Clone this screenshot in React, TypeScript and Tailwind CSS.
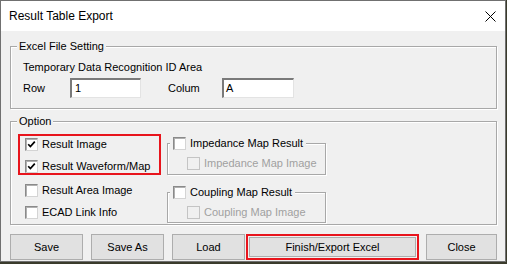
import React from "react";

const font = { fontFamily: '"Liberation Sans", Arial, sans-serif' };

function Check({ checked = false, disabled = false }: { checked?: boolean; disabled?: boolean }) {
  return (
    <div
      className={
        "w-[13px] h-[13px] shrink-0 flex items-center justify-center border " +
        (disabled
          ? "border-[#c4c4c4] bg-[#f0f0f0]"
          : "border-t-[#8a8a8a] border-l-[#8a8a8a] border-r-[#d4d4d4] border-b-[#d4d4d4] bg-white shadow-[inset_1px_1px_0_#b0b0b0]")
      }
    >
      {checked && (
        <svg width="9" height="9" viewBox="0 0 9 9">
          <path d="M1.2 4.2 L3.4 6.6 L7.8 1.6" fill="none" stroke="#000" strokeWidth="1.7" />
        </svg>
      )}
    </div>
  );
}

function CheckRow({ label, checked, disabled }: { label: string; checked?: boolean; disabled?: boolean }) {
  return (
    <div className="flex items-center h-[13px]">
      <Check checked={checked} disabled={disabled} />
      <span className={"ml-[4px] text-[11px] leading-[13px] whitespace-nowrap " + (disabled ? "text-[#a0a0a0]" : "text-black")}>
        {label}
      </span>
    </div>
  );
}

function Btn({ label, w }: { label: string; w: string }) {
  return (
    <div className={"h-[26px] flex items-center justify-center bg-[#e1e1e1] border border-[#adadad] text-[11px] text-black " + w}>
      {label}
    </div>
  );
}

export default function App() {
  return (
    <div className="w-[507px] h-[264px] bg-[#3a3b2c] overflow-hidden" style={font}>
      <div className="w-[506px] h-[262px] border border-[#707070] flex flex-col bg-white">
        {/* title bar */}
        <div className="h-[30px] shrink-0 bg-white flex items-center justify-between pl-[8px] pr-[9px]">
          <span className="text-[12px] text-black">Result Table Export</span>
          <svg width="11" height="11" viewBox="0 0 11 11">
            <path d="M0.5 0.5 L10.5 10.5 M10.5 0.5 L0.5 10.5" stroke="#000" strokeWidth="1" />
          </svg>
        </div>
        {/* client */}
        <div className="flex-1 bg-[#f0f0f0] pl-[9px] pr-[8px] flex flex-col">
          {/* Excel File Setting */}
          <div className="relative mt-[15px] h-[63px] border border-[#a8a8a8] shadow-[inset_1px_1px_0_#fff,1px_1px_0_#fff] pt-[13px] pl-[12px]">
            <span className="absolute left-[6px] top-[-8px] px-[2px] bg-[#f0f0f0] text-[11px] leading-[14px]">Excel File Setting</span>
            <div className="text-[11px] leading-[14px]">Temporary Data Recognition ID Area</div>
            <div className="flex items-center mt-[4px] h-[20px]">
              <span className="w-[47px] text-[11px]">Row</span>
              <div className="w-[71px] h-[20px] bg-white border-t-2 border-l-2 border-t-[#7a7a7a] border-l-[#7a7a7a] border-r border-b border-r-[#e3e3e3] border-b-[#e3e3e3] text-[11px] leading-[16px] pl-[3px]">1</div>
              <span className="ml-[27px] w-[54px] text-[11px]">Colum</span>
              <div className="w-[72px] h-[20px] bg-white border-t-2 border-l-2 border-t-[#7a7a7a] border-l-[#7a7a7a] border-r border-b border-r-[#e3e3e3] border-b-[#e3e3e3] text-[11px] leading-[16px] pl-[2px]">A</div>
            </div>
          </div>
          {/* Option */}
          <div className="relative mt-[12px] h-[104px] border border-[#a8a8a8] shadow-[inset_1px_1px_0_#fff,1px_1px_0_#fff] flex items-start">
            <span className="absolute left-[6px] top-[-8px] px-[2px] bg-[#f0f0f0] text-[11px] leading-[14px]">Option</span>
            {/* left column */}
            <div className="flex flex-col pl-[7px] pt-[12px]">
              <div className="w-[143px] h-[41px] border-2 border-[#e8141c] pl-[5px] pt-[2px] flex flex-col gap-[9px]">
                <CheckRow label="Result Image" checked />
                <CheckRow label="Result Waveform/Map" checked />
              </div>
              <div className="pl-[7px] mt-[9px] flex flex-col gap-[9px]">
                <CheckRow label="Result Area Image" />
                <CheckRow label="ECAD Link Info" />
              </div>
            </div>
            {/* right column */}
            <div className="ml-[6px] mt-[21px] flex flex-col gap-[17px]">
              <div className="relative w-[159px] h-[32px] border border-[#a8a8a8] shadow-[inset_1px_1px_0_#fff,1px_1px_0_#fff] pl-[19px] pt-[13px]">
                <div className="absolute left-[2px] top-[-7px] px-[3px] bg-[#f0f0f0]">
                  <CheckRow label="Impedance Map Result" />
                </div>
                <CheckRow label="Impedance Map Image" disabled />
              </div>
              <div className="relative w-[159px] h-[31px] border border-[#a8a8a8] shadow-[inset_1px_1px_0_#fff,1px_1px_0_#fff] pl-[19px] pt-[13px]">
                <div className="absolute left-[2px] top-[-7px] px-[3px] bg-[#f0f0f0]">
                  <CheckRow label="Coupling Map Result" />
                </div>
                <CheckRow label="Coupling Map Image" disabled />
              </div>
            </div>
          </div>
          {/* buttons */}
          <div className="mt-[9px] flex items-center">
            <Btn label="Save" w="w-[73px]" />
            <div className="ml-[8px]"><Btn label="Save As" w="w-[73px]" /></div>
            <div className="ml-[8px]"><Btn label="Load" w="w-[73px]" /></div>
            <div className="ml-[1px] w-[173px] h-[26px] border-2 border-[#e8141c] p-[1px]">
              <div className="h-full flex items-center justify-center bg-[#e1e1e1] border border-[#adadad] text-[11px] leading-none">Finish/Export Excel</div>
            </div>
            <div className="ml-[7px]"><Btn label="Close" w="w-[71px]" /></div>
          </div>
        </div>
      </div>
    </div>
  );
}
